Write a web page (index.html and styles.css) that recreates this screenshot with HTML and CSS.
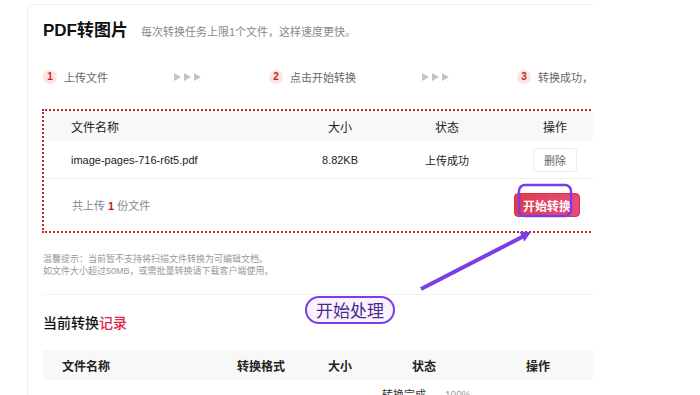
FILE: index.html
```html
<!doctype html>
<html lang="zh-CN">
  <head>
    <meta charset="utf-8">
    <title>PDF转图片</title>
    <link rel="stylesheet" href="styles.css">
  </head>
  <body>
    <div class="page">
      <div class="head">
        <h1>PDF转图片</h1>
        <span class="sub">每次转换任务上限1个文件，这样速度更快。</span>
      </div>

      <div class="steps">
        <span class="num">1</span><span class="step-text">上传文件</span>
        <svg class="arrows" width="27" height="8" viewBox="0 0 27 8"><polygon points="0,0 7,4 0,8"/><polygon points="10,0 17,4 10,8"/><polygon points="20,0 27,4 20,8"/></svg>
        <span class="num">2</span><span class="step-text">点击开始转换</span>
        <svg class="arrows" width="27" height="8" viewBox="0 0 27 8"><polygon points="0,0 7,4 0,8"/><polygon points="10,0 17,4 10,8"/><polygon points="20,0 27,4 20,8"/></svg>
        <span class="num">3</span><span class="step-text">转换成功，下载文件</span>
      </div>

      <div class="upload-box">
        <div class="row row-head">
          <div class="c-name">文件名称</div>
          <div class="c-mid">大小</div>
          <div class="c-mid">状态</div>
          <div class="c-mid">操作</div>
        </div>
        <div class="row row-file">
          <div class="c-name latin">image-pages-716-r6t5.pdf</div>
          <div class="c-mid latin">8.82KB</div>
          <div class="c-mid">上传成功</div>
          <div class="c-mid"><button class="btn-del">删除</button></div>
        </div>
        <div class="box-foot">
          <span class="count">共上传 <b>1</b> 份文件</span>
          <button class="btn-start">开始转换</button>
        </div>
      </div>

      <div class="tips">
        <p>温馨提示：当前暂不支持将扫描文件转换为可编辑文档。</p>
        <p>如文件大小超过50MB，或需批量转换请下载客户端使用。</p>
      </div>

      <div class="history">
        <h2>当前转换<span>记录</span></h2>
        <div class="hist-head">
          <div class="h-name">文件名称</div>
          <div>转换格式</div>
          <div>大小</div>
          <div>状态</div>
          <div>操作</div>
        </div>
        <div class="hist-row">
          <div class="h-name"></div>
          <div></div>
          <div></div>
          <div class="h-status">转换完成 <span>100%</span></div>
          <div></div>
        </div>
      </div>
    </div>

    <!-- annotations drawn over the screenshot -->
    <svg class="marks" width="700" height="395" viewBox="0 0 700 395">
      <rect x="519" y="185" width="52" height="31" rx="6" fill="none" stroke="#7b3de6" stroke-width="2.5"/>
      <line x1="421" y1="289" x2="523" y2="236.5" stroke="#7b3de6" stroke-width="4"/>
      <polygon points="531,232 524.4,241.5 519.6,231.8" fill="#7b3de6"/>
    </svg>
    <div class="note">开始处理</div>
  </body>
</html>
```

FILE: styles.css
```css
body {
  margin: 0;
  position: relative;
  width: 700px;
  height: 395px;
  overflow: hidden;
  background: #fff;
  font-family: "Liberation Sans", "Noto Sans CJK SC", sans-serif;
  color: #333;
}

.page {
  margin: 4px 0 0 27px;
  width: 566px;
  height: 391px;
  box-sizing: border-box;
  padding-left: 15px;
  border-top: 1px solid #eeeeee;
  border-left: 1px solid #eeeeee;
  border-top-left-radius: 6px;
  overflow: hidden;
}

.head {
  display: flex;
  align-items: center;
  padding-top: 14px;
  height: 24px;
}

h1 {
  margin: 0;
  font-size: 17px;
  line-height: 24px;
  font-weight: bold;
  color: #111;
}

.sub {
  margin-left: 13px;
  font-size: 11px;
  color: #888;
}

/* steps */
.steps {
  display: flex;
  align-items: center;
  margin-top: 24px;
  height: 20px;
  white-space: nowrap;
}

.num {
  width: 14px;
  height: 14px;
  border-radius: 50%;
  background: #fde4df;
  color: #c4252d;
  font-size: 10px;
  font-weight: bold;
  line-height: 14px;
  text-align: center;
  flex-shrink: 0;
}

.step-text {
  margin-left: 7px;
  font-size: 11px;
  color: #666;
}

.arrows {
  fill: #c4c4c4;
  margin: 0 68px 0 66px;
  flex-shrink: 0;
}

/* upload box */
.upload-box {
  margin: 22px 0 0 -1px;
  width: 572px;
  box-sizing: border-box;
  border: 2px dotted #c0282d;
}

.row {
  display: grid;
  grid-template-columns: 240px 112px 102px 114px;
  align-items: center;
}

.row-head {
  height: 30px;
  background: #f8f8f8;
  font-size: 12px;
  color: #222;
}

.row-file {
  height: 37px;
  border-bottom: 1px solid #eeeeee;
  font-size: 11px;
  color: #222;
}

.c-name {
  padding-left: 27px;
}

.c-mid {
  text-align: center;
}

.latin {
  font-size: 11px;
}

.btn-del {
  width: 44px;
  height: 24px;
  border: 1px solid #ececec;
  border-radius: 3px;
  background: #fff;
  font-family: inherit;
  font-size: 11px;
  color: #666;
}

.box-foot {
  height: 52px;
  display: flex;
  align-items: center;
  justify-content: space-between;
  padding: 0 32px 0 28px;
}

.count {
  font-size: 11px;
  color: #888;
}

.count b {
  color: #d0141e;
  font-weight: bold;
}

.btn-start {
  width: 66px;
  height: 24px;
  border: 1px solid #d8343f;
  border-radius: 4px;
  background: linear-gradient(90deg, #e23b47, #e9497f);
  color: #fff;
  font-family: inherit;
  font-size: 12px;
  font-weight: bold;
  padding: 0;
}

/* tips */
.tips {
  margin-top: 20px;
}

.tips p {
  margin: 0;
  font-size: 9px;
  line-height: 12px;
  color: #999;
}

/* history */
.history {
  margin-top: 17px;
  border-top: 1px solid #f2f2f2;
}

h2 {
  margin: 18px 0 0;
  font-size: 14px;
  line-height: 20px;
  font-weight: 500;
  color: #111;
}

h2 span {
  color: #e0234a;
}

.hist-head,
.hist-row {
  display: grid;
  grid-template-columns: 179px 78px 80px 88px 140px;
  white-space: nowrap;
}

.hist-head {
  margin-top: 17px;
  height: 30px;
  align-items: center;
  background: #f8f8f8;
  font-size: 12px;
  font-weight: bold;
  color: #222;
  text-align: center;
}

.hist-head .h-name,
.hist-row .h-name {
  text-align: left;
  padding-left: 19px;
}

.hist-row {
  padding-top: 6px;
  font-size: 11px;
  color: #333;
}

.h-status {
  justify-self: start;
  padding-left: 2px;
}

.h-status span {
  margin-left: 16px;
  font-size: 10px;
  color: #999;
}

/* annotations */
.marks {
  position: absolute;
  left: 0;
  top: 0;
  pointer-events: none;
}

.note {
  position: absolute;
  left: 305px;
  top: 296px;
  width: 86px;
  height: 24px;
  border: 2px solid #7b3de6;
  border-radius: 14px;
  background: #f8f3ff;
  font-family: "Noto Sans CJK SC", sans-serif;
  font-size: 17px;
  line-height: 24px;
  text-align: center;
  color: #4b2a8c;
}
```
